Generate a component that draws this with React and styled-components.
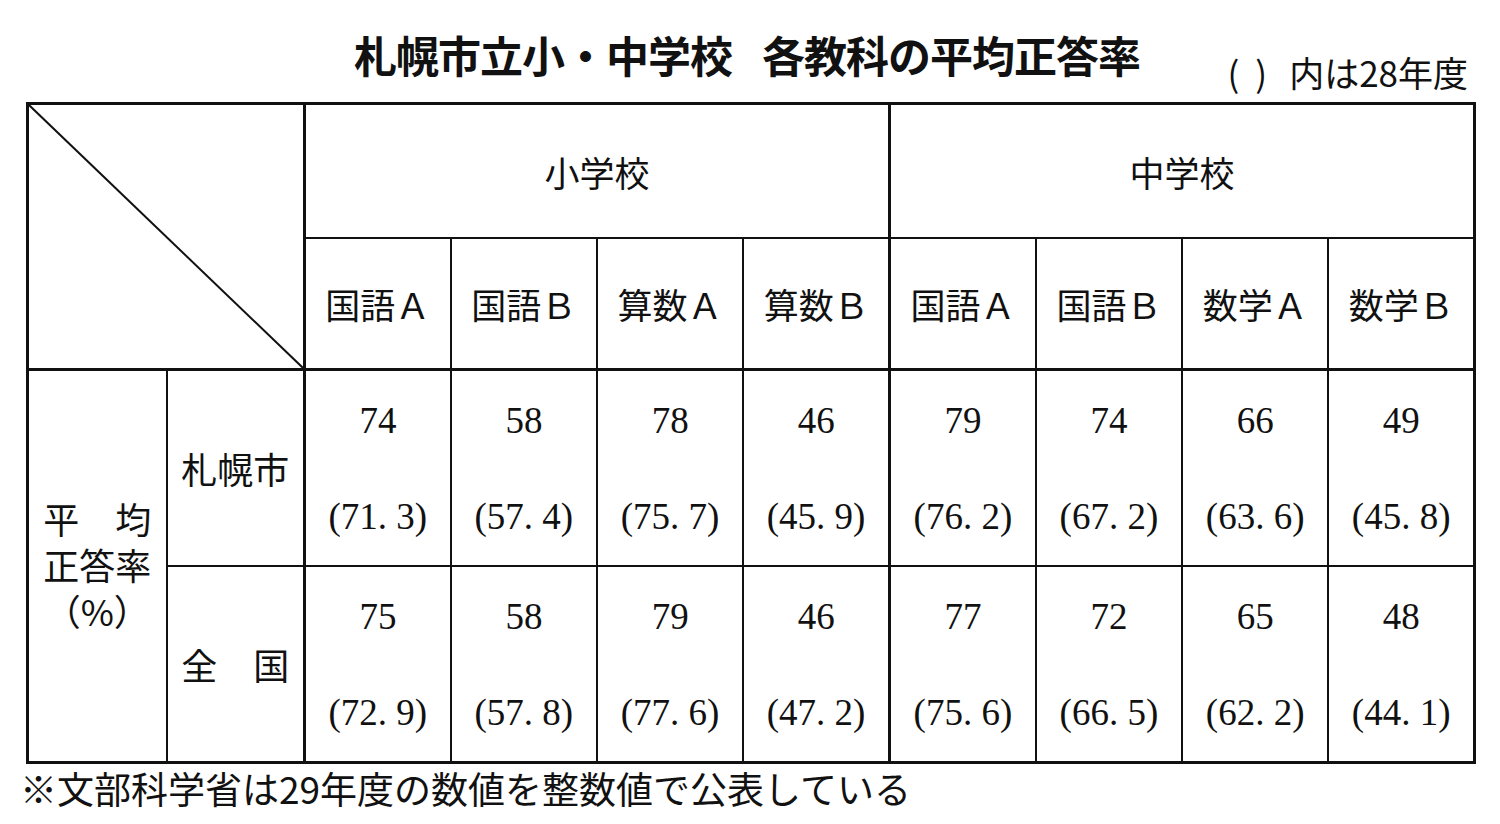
import React from 'react';
import styled, { createGlobalStyle } from 'styled-components';

const GlobalStyle = createGlobalStyle`
  body {
    margin: 0;
    background: #ffffff;
    color: #111111;
    font-family: "Noto Sans CJK JP", "Noto Sans", sans-serif;
  }
`;

const subjects = ['国語Ａ', '国語Ｂ', '算数Ａ', '算数Ｂ', '国語Ａ', '国語Ｂ', '数学Ａ', '数学Ｂ'];

const sapporo = [
  ['74', '(71. 3)'], ['58', '(57. 4)'], ['78', '(75. 7)'], ['46', '(45. 9)'],
  ['79', '(76. 2)'], ['74', '(67. 2)'], ['66', '(63. 6)'], ['49', '(45. 8)'],
];

const zenkoku = [
  ['75', '(72. 9)'], ['58', '(57. 8)'], ['79', '(77. 6)'], ['46', '(47. 2)'],
  ['77', '(75. 6)'], ['72', '(66. 5)'], ['65', '(62. 2)'], ['48', '(44. 1)'],
];

const App = () => {
  return (
    <Page>
      <GlobalStyle />
      <Header>
        <span />
        <Title>
          <span>札幌市立小・中学校</span>
          <span>各教科の平均正答率</span>
        </Title>
        <Note>
          <Paren $gap={16}>(</Paren>
          <Paren $gap={22}>)</Paren>
          内は28年度
        </Note>
      </Header>

      <Table>
        <colgroup>
          <col style={{ width: 139 }} />
          <col style={{ width: 138 }} />
          {subjects.map((_, i) => (
            <col key={i} style={{ width: 146.25 }} />
          ))}
        </colgroup>
        <tbody>
          <tr>
            <Corner colSpan={2} rowSpan={2}>
              <Diagonal viewBox="0 0 100 100" preserveAspectRatio="none">
                <line x1="0" y1="0" x2="100" y2="100" stroke="#111" strokeWidth="2" vectorEffect="non-scaling-stroke" />
              </Diagonal>
            </Corner>
            <HeadCell colSpan={4} $h={132} $thickRight>小学校</HeadCell>
            <HeadCell colSpan={4} $h={132}>中学校</HeadCell>
          </tr>
          <tr>
            {subjects.map((s, i) => (
              <HeadCell key={i} $h={129} $thickBottom $thickRight={i === 3}>
                {s}
              </HeadCell>
            ))}
          </tr>
          <tr>
            <GroupCell rowSpan={2}>
              <div>平　均</div>
              <div>正答率</div>
              <div>（%）</div>
            </GroupCell>
            <RowHead>札幌市</RowHead>
            {sapporo.map(([v, p], i) => (
              <DataCell key={i} $thickRight={i === 3}>
                <Value>{v}</Value>
                <Prev>{p}</Prev>
              </DataCell>
            ))}
          </tr>
          <tr>
            <RowHead>全　国</RowHead>
            {zenkoku.map(([v, p], i) => (
              <DataCell key={i} $thickRight={i === 3}>
                <Value>{v}</Value>
                <Prev>{p}</Prev>
              </DataCell>
            ))}
          </tr>
        </tbody>
      </Table>

      <Footnote>※文部科学省は29年度の数値を整数値で公表している</Footnote>
    </Page>
  );
};

const Page = styled.div`
  width: 1500px;
  height: 824px;
  overflow: hidden;
`;

const Header = styled.div`
  display: grid;
  grid-template-columns: 1fr auto 1fr;
  align-items: start;
  padding: 31px 32px 0 26px;
  height: 71px;
`;

const Title = styled.h1`
  margin: 0;
  display: flex;
  gap: 30px;
  font-size: 43px;
  line-height: 46px;
  font-weight: 700;
  letter-spacing: -1px;
`;

const Note = styled.div`
  justify-self: end;
  margin-top: 22px;
  font-size: 35px;
  line-height: 38px;
  white-space: nowrap;
`;

const Paren = styled.span`
  display: inline-block;
  margin-right: ${(p) => p.$gap}px;
`;

const Table = styled.table`
  border-collapse: collapse;
  table-layout: fixed;
  width: 1447px;
  margin-left: 26px;
  border: 3px solid #111;
`;

const Cell = styled.td`
  border: 2px solid #111;
  padding: 0;
  font-size: 35px;
  text-align: center;
  ${(p) => p.$thickRight && 'border-right: 3px solid #111;'}
  ${(p) => p.$thickBottom && 'border-bottom: 3px solid #111;'}
`;

const Corner = styled(Cell)`
  position: relative;
  border-right: 3px solid #111;
  border-bottom: 3px solid #111;
`;

const Diagonal = styled.svg`
  position: absolute;
  inset: 0;
  width: 100%;
  height: 100%;
`;

const HeadCell = styled(Cell)`
  height: ${(p) => p.$h}px;
  vertical-align: middle;
`;

const GroupCell = styled(Cell)`
  font-size: 36px;
  line-height: 46px;
  vertical-align: middle;
  padding-bottom: 4px;
`;

const RowHead = styled(Cell)`
  height: 194px;
  border-right: 3px solid #111;
  font-size: 36px;
  vertical-align: middle;
`;

const DataCell = styled(Cell)`
  height: 164px;
  vertical-align: top;
  padding-top: 30px;
  font-family: "Liberation Serif", "Times New Roman", serif;
`;

const Value = styled.div`
  font-size: 37px;
  line-height: 40px;
`;

const Prev = styled.div`
  margin-top: 56px;
  font-size: 37px;
  line-height: 40px;
`;

const Footnote = styled.div`
  margin: 2px 0 0 20px;
  font-size: 37px;
  line-height: 44px;
`;

export default App;
